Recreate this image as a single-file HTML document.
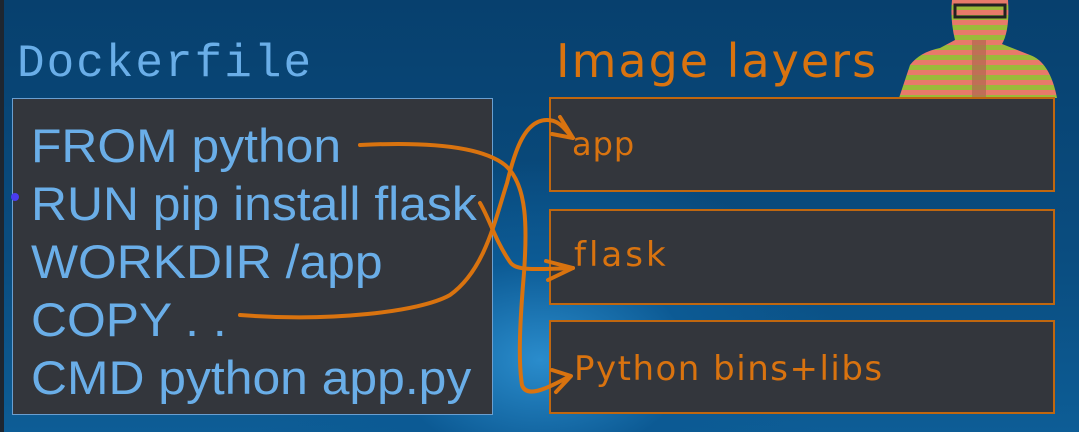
<!DOCTYPE html>
<html><head><meta charset="utf-8"><style>
html,body{margin:0;padding:0}
body{width:1079px;height:432px;overflow:hidden;position:relative;
background:radial-gradient(ellipse 300px 200px at 540px 360px,#2a8ccc 0%,#0c5a94 50%,rgba(0,0,0,0) 100%),linear-gradient(180deg,#07406e 0%,#0a4d80 60%,#0d5d96 100%);font-family:"Liberation Sans",sans-serif}
.strip{position:absolute;left:0;top:0;width:4px;height:432px;background:#1e2630}
.title{position:absolute;left:17px;top:41px;font-family:"Liberation Mono",monospace;font-size:46px;color:#6aaee8;letter-spacing:2px;line-height:1}
.lbox{position:absolute;left:12px;top:98px;width:479px;height:315px;background:#33363c;border:1.5px solid #6a9fd0}
.code{position:absolute;left:31px;font-size:47px;color:#6aaee8;white-space:nowrap;line-height:1;transform:scaleX(1.06);transform-origin:0 0}
.rbox{position:absolute;left:549px;width:506px;background:#33363c;border:2px solid #c0670f;box-sizing:border-box}
.hand{position:absolute;font-family:"DejaVu Sans",sans-serif;color:#d9730f;white-space:nowrap;line-height:1}
</style></head><body>
<div class="strip"></div>
<div class="title">Dockerfile</div>
<div class="lbox"></div>
<div class="code" style="top:122px">FROM python</div>
<div class="code" style="top:180px">RUN pip install flask</div>
<div class="code" style="top:238px">WORKDIR /app</div>
<div class="code" style="top:296px">COPY . .</div>
<div class="code" style="top:354px">CMD python app.py</div>
<div style="position:absolute;left:11px;top:193px;width:8px;height:8px;border-radius:50%;background:#4a3cf0"></div>
<svg style="position:absolute;left:890px;top:0" width="170" height="100">
<defs><pattern id="st" width="10" height="10" patternUnits="userSpaceOnUse"><rect width="10" height="5" fill="#e87a6a"/><rect y="5" width="10" height="5" fill="#9cba3a"/></pattern></defs>
<path d="M9 98 L20 65 Q30 52 50 48 L65 40 Q60 20 62 0 L118 0 Q120 30 112 44 L140 55 Q160 62 167 98 Z" fill="url(#st)"/>
<rect x="65" y="5" width="50" height="12" fill="none" stroke="#222" stroke-width="3"/>
<rect x="82" y="40" width="14" height="58" fill="#b06a50" opacity="0.7"/>
</svg>
<div class="hand" style="left:556px;top:38px;font-size:46px;letter-spacing:2px">Image layers</div>
<div class="rbox" style="top:97px;height:95px"></div>
<div class="rbox" style="top:209px;height:96px"></div>
<div class="rbox" style="top:320px;height:94px"></div>
<div class="hand" style="left:572px;top:128px;font-size:32px;letter-spacing:1px">app</div>
<div class="hand" style="left:574px;top:238px;font-size:34px;letter-spacing:3px">flask</div>
<div class="hand" style="left:574px;top:352px;font-size:34px;letter-spacing:1.5px">Python bins+libs</div>
<svg style="position:absolute;left:0;top:0" width="1079" height="432" fill="none" stroke="#d9730f" stroke-width="4" stroke-linecap="round" stroke-linejoin="round">
<path d="M360 145 C420 142 480 145 505 165 C528 185 527 230 524 273 C520 320 518 360 522 385 C526 398 545 390 570 376"/>
<path d="M552 370 L571 376 L556 392"/>
<path d="M480 203 C490 220 495 240 510 262 C515 270 530 270 573 268"/>
<path d="M546 261 L573 268 L548 280"/>
<path d="M240 315 C330 322 420 312 450 295 C485 270 495 220 507 183 C515 150 525 120 547 120 C560 120 565 130 573 138"/>
<path d="M560 117 L573 138 L552 134"/>
</svg>
</body></html>
